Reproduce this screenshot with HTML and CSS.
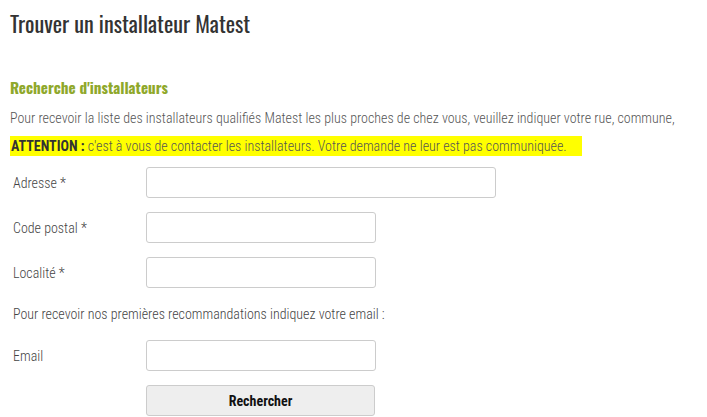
FILE: index.html
```html
<!DOCTYPE html>
<html>
<head>
    <title>Trouver un installateur Matest</title>
    <link rel="stylesheet" href="styles.css">
</head>
<body>
    <div class="page">
        <h1>Trouver un installateur Matest</h1>

        <h2>Recherche d'installateurs</h2>
        <p class="intro">Pour recevoir la liste des installateurs qualifiés Matest les plus proches de chez vous, veuillez indiquer votre rue, commune,</p>
        <p class="warning"><span class="mark"><strong>ATTENTION :</strong> c'est à vous de contacter les installateurs. Votre demande ne leur est pas communiquée.</span></p>

        <form class="search-form">
            <div class="row">
                <label for="adresse">Adresse *</label>
                <input type="text" id="adresse" class="wide">
            </div>
            <div class="row">
                <label for="cp">Code postal *</label>
                <input type="text" id="cp">
            </div>
            <div class="row">
                <label for="localite">Localité *</label>
                <input type="text" id="localite">
            </div>

            <p class="note">Pour recevoir nos premières recommandations indiquez votre email :</p>

            <div class="row">
                <label for="email">Email</label>
                <input type="text" id="email">
            </div>
            <div class="row">
                <span></span>
                <button type="button">Rechercher</button>
            </div>
        </form>
    </div>
</body>
</html>
```
FILE: styles.css
```css
body {
    margin: 0;
    padding: 0;
    background: #fff;
    font-family: Roboto, sans-serif;
    font-stretch: 75%;
    font-weight: 300;
    font-size: 14px;
    color: #555;
}
.page {
    padding: 0 10px;
}
h1 {
    font-family: Oswald, Roboto, sans-serif;
    font-stretch: normal;
    font-weight: 400;
    font-size: 22.2px;
    line-height: 30px;
    color: #333;
    margin: 8px 0 0;
}
h2 {
    font-family: Oswald, Roboto, sans-serif;
    font-stretch: normal;
    font-weight: 700;
    font-size: 15.2px;
    line-height: 22px;
    color: #8fa82b;
    margin: 38px 0 0;
}
.intro {
    margin: 9px 0 0;
    line-height: 22px;
}
.warning {
    margin: 7px 0 0;
    line-height: 20px;
}
.mark {
    display: inline-block;
    background: #ffff00;
    padding: 0 15px 0 1px;
}
.mark strong {
    font-weight: 700;
    color: #333;
}
.search-form {
    margin-top: 11px;
    padding-left: 3px;
}
.row {
    display: grid;
    grid-template-columns: 133px auto;
    align-items: center;
    height: 31px;
    margin-bottom: 14px;
}
.row label {
    color: #444;
}
input {
    width: 230px;
    height: 31px;
    box-sizing: border-box;
    border: 1px solid #ccc;
    border-radius: 3px;
    background: #fff;
    margin: 0;
}
input.wide {
    width: 350px;
}
.note {
    margin: 16px 0 16px;
    line-height: 20px;
    color: #444;
}
button {
    width: 229px;
    height: 31px;
    box-sizing: border-box;
    border: 1px solid #ccc;
    border-radius: 3px;
    background: #eee;
    font-family: Roboto, sans-serif;
    font-stretch: 75%;
    font-weight: 700;
    font-size: 14px;
    color: #111;
}
```
